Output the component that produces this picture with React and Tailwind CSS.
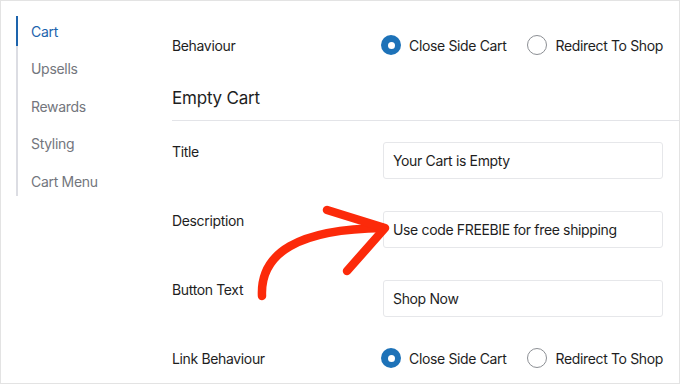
const navItems = ["Cart", "Upsells", "Rewards", "Styling", "Cart Menu"];

function Radio({ checked, label }) {
  return (
    <div className="flex items-center gap-2">
      {checked ? (
        <span className="w-[20px] h-[20px] rounded-full bg-[#1d72b8] flex items-center justify-center">
          <span className="w-[7px] h-[7px] rounded-full bg-white" />
        </span>
      ) : (
        <span className="w-[20px] h-[20px] rounded-full border border-[#8c8f94] bg-white" />
      )}
      <span className="text-[14px] tracking-[-0.35px] text-[#1e1e1e]">{label}</span>
    </div>
  );
}

function RadioRow({ label }) {
  return (
    <div className="flex items-center h-[40px]">
      <div className="w-[209px] text-[14px] tracking-[-0.35px] text-[#1e1e1e]">{label}</div>
      <div className="flex items-center gap-[21px]">
        <Radio checked label="Close Side Cart" />
        <Radio label="Redirect To Shop" />
      </div>
    </div>
  );
}

function InputRow({ label, value }) {
  return (
    <div className="flex items-start">
      <div className="w-[211px] text-[14px] tracking-[-0.35px] text-[#1e1e1e] leading-[20px]">{label}</div>
      <div className="w-[280px] h-[37px] border border-[#e6e7ea] rounded-[3px] bg-white flex items-center px-[9px] text-[14px] tracking-[-0.35px] text-[#1e1e1e]">
        {value}
      </div>
    </div>
  );
}

export default function App() {
  return (
    <div
      className="relative w-[680px] h-[384px] border border-[#e3e3e3] bg-white flex overflow-hidden"
      style={{ fontFamily: "Inter, 'Noto Sans', sans-serif" }}
    >
      <div className="w-[171px] shrink-0 pt-[15px] pl-[15px]">
        <div className="flex flex-col gap-[7.5px] border-l-2 border-[#dcdde3]">
          {navItems.map((item, i) => (
            <div
              key={item}
              className={
                i === 0
                  ? "h-[30px] flex items-center pl-[13px] -ml-[2px] border-l-2 border-[#1d64ad] text-[14px] tracking-[-0.3px] text-[#1d64ad]"
                  : "h-[30px] flex items-center pl-[13px] text-[14px] tracking-[-0.3px] text-[#73767d]"
              }
            >
              {item}
            </div>
          ))}
        </div>
      </div>

      <div className="flex-1 flex flex-col pt-[24px]">
        <RadioRow label="Behaviour" />
        <div className="mt-[21px] text-[17px] tracking-[-0.2px] text-[#1e1e1e] leading-[24px]">Empty Cart</div>
        <div className="mt-[10px] h-px bg-[#e3e4e8]" />
        <div className="mt-[21px] flex flex-col gap-[32px]">
          <InputRow label="Title" value="Your Cart is Empty" />
          <InputRow label="Description" value="Use code FREEBIE for free shipping" />
          <InputRow label="Button Text" value="Shop Now" />
        </div>
        <div className="mt-[21px]">
          <RadioRow label="Link Behaviour" />
        </div>
      </div>

      <svg
        className="absolute left-[239px] top-[194px]"
        width="160"
        height="115"
        viewBox="0 0 160 115"
        fill="none"
      >
        <path
          d="M22 101 C 20 58, 58 34, 143 33"
          stroke="#fc2a0a"
          strokeWidth="8.5"
          strokeLinecap="round"
        />
        <path
          d="M87 15 L145 33 L107 76"
          stroke="#fc2a0a"
          strokeWidth="8.5"
          strokeLinecap="round"
          strokeLinejoin="round"
        />
      </svg>
    </div>
  );
}
